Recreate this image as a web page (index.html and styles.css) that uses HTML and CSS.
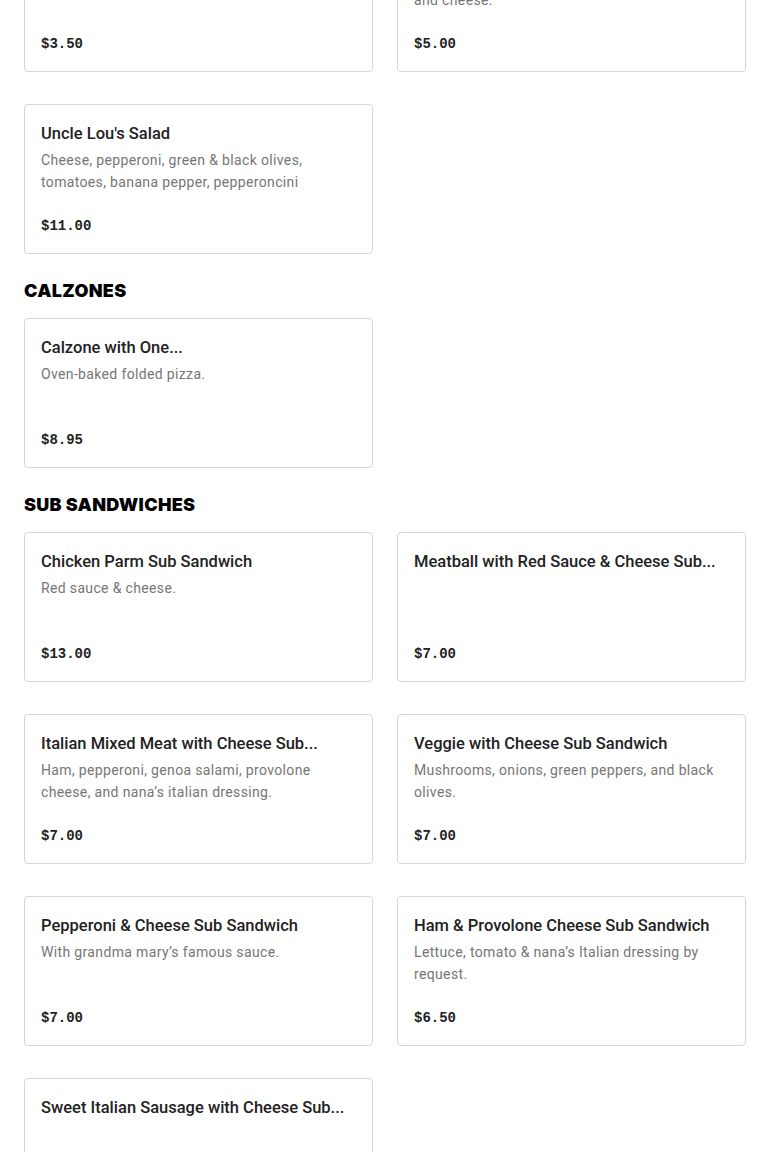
FILE: index.html
```html
<!DOCTYPE html>
<html lang="en">
<head>
    <meta charset="UTF-8">
    <meta name="viewport" content="width=device-width, initial-scale=1.0">
    <title>Menu</title>
    <link rel="stylesheet" href="styles.css">
</head>
<body>

    <main class="menu">

        <!-- Salads (scrolled past) -->
        <section class="menu-section menu-section--scrolled">
            <div class="item-grid">
                <div class="item-card">
                    <h3 class="item-name">Side Salad</h3>
                    <p class="item-desc">Lettuce, tomatoes and onions.</p>
                    <span class="item-price">$3.50</span>
                </div>
                <div class="item-card">
                    <h3 class="item-name">Chef Salad</h3>
                    <p class="item-desc">Lettuce, tomatoes, onions, peppers, ham and&nbsp;cheese.</p>
                    <span class="item-price">$5.00</span>
                </div>
                <div class="item-card">
                    <h3 class="item-name">Uncle Lou's Salad</h3>
                    <p class="item-desc">Cheese, pepperoni, green &amp; black olives, tomatoes, banana pepper, pepperoncini</p>
                    <span class="item-price">$11.00</span>
                </div>
            </div>
        </section>

        <!-- Calzones -->
        <section class="menu-section">
            <h2 class="section-title">CALZONES</h2>
            <div class="item-grid">
                <div class="item-card">
                    <h3 class="item-name">Calzone with One...</h3>
                    <p class="item-desc">Oven-baked folded pizza.</p>
                    <span class="item-price">$8.95</span>
                </div>
            </div>
        </section>

        <!-- Sub Sandwiches -->
        <section class="menu-section">
            <h2 class="section-title">SUB SANDWICHES</h2>
            <div class="item-grid">
                <div class="item-card">
                    <h3 class="item-name">Chicken Parm Sub Sandwich</h3>
                    <p class="item-desc">Red sauce &amp; cheese.</p>
                    <span class="item-price">$13.00</span>
                </div>
                <div class="item-card">
                    <h3 class="item-name">Meatball with Red Sauce &amp; Cheese Sub...</h3>
                    <span class="item-price">$7.00</span>
                </div>
                <div class="item-card">
                    <h3 class="item-name">Italian Mixed Meat with Cheese Sub...</h3>
                    <p class="item-desc">Ham, pepperoni, genoa salami, provolone cheese, and nana’s italian dressing.</p>
                    <span class="item-price">$7.00</span>
                </div>
                <div class="item-card">
                    <h3 class="item-name">Veggie with Cheese Sub Sandwich</h3>
                    <p class="item-desc">Mushrooms, onions, green peppers, and black olives.</p>
                    <span class="item-price">$7.00</span>
                </div>
                <div class="item-card">
                    <h3 class="item-name">Pepperoni &amp; Cheese Sub Sandwich</h3>
                    <p class="item-desc">With grandma mary’s famous sauce.</p>
                    <span class="item-price">$7.00</span>
                </div>
                <div class="item-card">
                    <h3 class="item-name">Ham &amp; Provolone Cheese Sub Sandwich</h3>
                    <p class="item-desc">Lettuce, tomato &amp; nana’s Italian dressing by request.</p>
                    <span class="item-price">$6.50</span>
                </div>
                <div class="item-card">
                    <h3 class="item-name">Sweet Italian Sausage with Cheese Sub...</h3>
                    <span class="item-price">$7.00</span>
                </div>
            </div>
        </section>

    </main>

</body>
</html>
```

FILE: styles.css
```css
body {
    font-family: 'Roboto', 'Liberation Sans', sans-serif;
    background-color: #fff;
    color: #222;
    margin: 0;
    padding: 0;
}
.menu {
    padding: 0 24px 40px;
}
.menu-section {
    margin-top: 24px;
}
/* page is scrolled: first row of cards sits above the viewport */
.menu-section--scrolled {
    margin-top: -78px;
}
.section-title {
    margin: 0 0 12px;
    font-family: 'Inter', 'Liberation Sans', sans-serif;
    font-size: 18px;
    line-height: 26px;
    padding-bottom: 2px;
    font-weight: 900;
    color: #000;
    letter-spacing: 0.3px;
}
.item-grid {
    display: grid;
    grid-template-columns: minmax(0, 1fr) minmax(0, 1fr);
    column-gap: 24px;
    row-gap: 32px;
}
.item-card {
    display: flex;
    flex-direction: column;
    box-sizing: border-box;
    height: 150px;
    padding: 16px 16px 15px;
    border: 1px solid #d6d6d6;
    border-radius: 4px;
    background-color: #fff;
}
.item-name {
    margin: 0;
    font-size: 16.5px;
    line-height: 24px;
    padding-top: 1px;
    font-weight: 500;
    color: #222;
    white-space: nowrap;
    overflow: hidden;
}
.item-desc {
    margin: 3px 0 0;
    font-size: 14px;
    line-height: 22px;
    letter-spacing: 0.35px;
    color: #767676;
}
.item-price {
    margin-top: auto;
    font-family: 'Liberation Mono', monospace;
    font-size: 14px;
    line-height: 24px;
    font-weight: 700;
    color: #222;
}
```
